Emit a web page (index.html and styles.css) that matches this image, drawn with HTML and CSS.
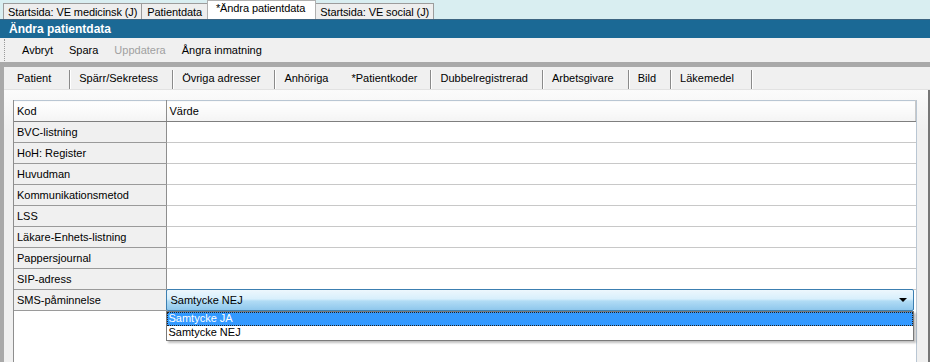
FILE: index.html
```html
<!DOCTYPE html>
<html lang="sv">
<head>
    <meta charset="UTF-8">
    <title>Ändra patientdata</title>
    <link rel="stylesheet" href="styles.css">
</head>
<body>
    <div class="window">
        <div class="doc-tabs">
            <div class="doc-tab">Startsida: VE medicinsk (J)</div>
            <div class="doc-tab">Patientdata</div>
            <div class="doc-tab active">*Ändra patientdata</div>
            <div class="doc-tab">Startsida: VE social (J)</div>
        </div>

        <div class="title-bar">Ändra patientdata</div>

        <div class="toolbar">
            <span class="grip"></span>
            <span class="tool">Avbryt</span>
            <span class="tool">Spara</span>
            <span class="tool disabled">Uppdatera</span>
            <span class="tool">Ångra inmatning</span>
        </div>

        <div class="workspace">
            <div class="page-tabs">
                <div class="page-tab">Patient</div>
                <div class="page-tab">Spärr/Sekretess</div>
                <div class="page-tab">Övriga adresser</div>
                <div class="page-tab no-sep">Anhöriga</div>
                <div class="page-tab active">*Patientkoder</div>
                <div class="page-tab">Dubbelregistrerad</div>
                <div class="page-tab">Arbetsgivare</div>
                <div class="page-tab">Bild</div>
                <div class="page-tab">Läkemedel</div>
            </div>

            <div class="page-body">
                <div class="grid">
                    <table class="codes">
                        <thead>
                            <tr><th class="kod">Kod</th><th>Värde</th></tr>
                        </thead>
                        <tbody>
                            <tr><td class="kod">BVC-listning</td><td class="value"></td></tr>
                            <tr><td class="kod">HoH: Register</td><td class="value"></td></tr>
                            <tr><td class="kod">Huvudman</td><td class="value"></td></tr>
                            <tr><td class="kod">Kommunikationsmetod</td><td class="value"></td></tr>
                            <tr><td class="kod">LSS</td><td class="value"></td></tr>
                            <tr><td class="kod">Läkare-Enhets-listning</td><td class="value"></td></tr>
                            <tr><td class="kod">Pappersjournal</td><td class="value"></td></tr>
                            <tr><td class="kod">SIP-adress</td><td class="value"></td></tr>
                            <tr>
                                <td class="kod">SMS-påminnelse</td>
                                <td class="value editing">
                                    <div class="combo">
                                        <span>Samtycke NEJ</span>
                                        <span class="arrow"></span>
                                    </div>
                                    <ul class="combo-list">
                                        <li class="selected">Samtycke JA</li>
                                        <li>Samtycke NEJ</li>
                                    </ul>
                                </td>
                            </tr>
                        </tbody>
                    </table>
                </div>
            </div>
        </div>
    </div>
</body>
</html>
```

FILE: styles.css
```css
* {
    box-sizing: border-box;
}
body {
    margin: 0;
    width: 930px;
    height: 362px;
    overflow: hidden;
    font-family: "Liberation Sans", Arial, sans-serif;
    font-size: 11px;
    color: #000;
    background: #f0f0f0;
}
.window {
    display: flex;
    flex-direction: column;
    height: 362px;
}

/* document tabs */
.doc-tabs {
    height: 19px;
    flex: none;
    display: flex;
    align-items: flex-end;
    padding-left: 3px;
    background: #d9eef1;
}
.doc-tab {
    height: 16px;
    line-height: 16px;
    padding: 0 4px;
    background: #eeeeee;
    border: 1px solid #9c9c9c;
    border-bottom: none;
    margin-right: -1px;
    letter-spacing: -0.1px;
    white-space: nowrap;
}
.doc-tab:nth-child(2) {
    padding: 0 5px;
}
.doc-tab.active {
    height: 19px;
    line-height: 15px;
    padding: 0 10px 0 8px;
    background: #fff;
    border-color: #b0b0b0;
    position: relative;
}

.title-bar {
    height: 19px;
    flex: none;
    line-height: 18px;
    padding-left: 9px;
    background: #1b6995;
    border-top: 1px solid #3d6582;
    color: #fff;
    font-weight: bold;
    font-size: 12px;
}

/* toolbar */
.toolbar {
    height: 24px;
    flex: none;
    display: flex;
    align-items: center;
    gap: 16px;
    background: #f0f0f0;
}
.grip {
    width: 1px;
    height: 22px;
    margin-left: 4px;
    margin-right: 1px;
    border-left: 1px dotted #9a9a9a;
}
.tool.disabled {
    color: #a0a0a0;
}

/* page area */
.workspace {
    flex: 1;
    display: flex;
    flex-direction: column;
    border-top: 5px solid #a9a9a9;
    border-left: 4px solid #a9a9a9;
}
.page-tabs {
    height: 23px;
    flex: none;
    display: flex;
    align-items: flex-end;
    padding-left: 4px;
    background: #f0f0f0;
    border-bottom: 1px solid #e2e2e2;
}
.page-tab {
    height: 19px;
    line-height: 17px;
    padding: 0 14px 0 9px;
    border-right: 1px solid #8a8a8a;
    box-shadow: 1px 0 0 #fff;
    white-space: nowrap;
}
.page-tab:first-child {
    padding-right: 18px;
}
.page-tab:last-child {
    padding-right: 17px;
}
.page-tab.no-sep {
    border-right-color: transparent;
    box-shadow: none;
}
.page-tab.active {
    padding: 0 13px 0 8px;
}

.page-body {
    flex: 1;
    padding: 10px 11px 0 9px;
    background: linear-gradient(#fbfbfb, #f0f0f0 40px);
    border-right: 2px solid #777;
}
.grid {
    height: 100%;
    background: #fff;
    border-left: 1px solid #8e8e8e;
    border-right: 1px solid #b9c6d3;
}

/* code table */
.codes {
    width: 100%;
    border-collapse: collapse;
    table-layout: fixed;
}
.codes th,
.codes td {
    height: 21px;
    padding: 0 0 0 3px;
    text-align: left;
    font-weight: normal;
    white-space: nowrap;
}
.codes th {
    background: linear-gradient(#ffffff, #f4f4f4);
    border-top: 1px solid #b9c6d3;
    border-bottom: 1px solid #7f7f7f;
    border-right: 1px solid #c9c9c9;
}
.codes th.kod {
    width: 152px;
    border-right: 1px solid #8e8e8e;
}
.codes td.kod {
    background: #f0f0f0;
    border-bottom: 1px solid #9a9a9a;
    border-right: 1px solid #8e8e8e;
}
.codes td.value {
    border-bottom: 1px solid #c8c8c8;
}
.codes td.editing {
    position: relative;
    border-bottom-color: transparent;
}

/* dropdown */
.combo {
    position: absolute;
    left: -1px;
    right: 2px;
    top: -1px;
    height: 22px;
    display: flex;
    align-items: center;
    justify-content: space-between;
    padding: 0 4px 0 4px;
    background: linear-gradient(#edf7fd, #d7effc 45%, #b1dcf5 55%, #8fc7ec);
    border: 1px solid #3c7fb1;
    border-radius: 2px;
}
.arrow {
    width: 0;
    height: 0;
    margin-right: 2px;
    border-left: 4px solid transparent;
    border-right: 4px solid transparent;
    border-top: 4px solid #000;
}
.combo-list {
    position: absolute;
    left: -1px;
    right: 2px;
    top: 21px;
    margin: 0;
    padding: 0;
    list-style: none;
    background: #fff;
    border: 1px solid #7a7a7a;
    box-shadow: 2px 2px 2px rgba(0, 0, 0, 0.25);
    z-index: 2;
}
.combo-list li {
    height: 14px;
    line-height: 13px;
    padding-left: 2px;
}
.combo-list li.selected {
    background: #3399ff;
    color: #fff;
    outline: 1px dotted #222;
    outline-offset: -1px;
}
```
